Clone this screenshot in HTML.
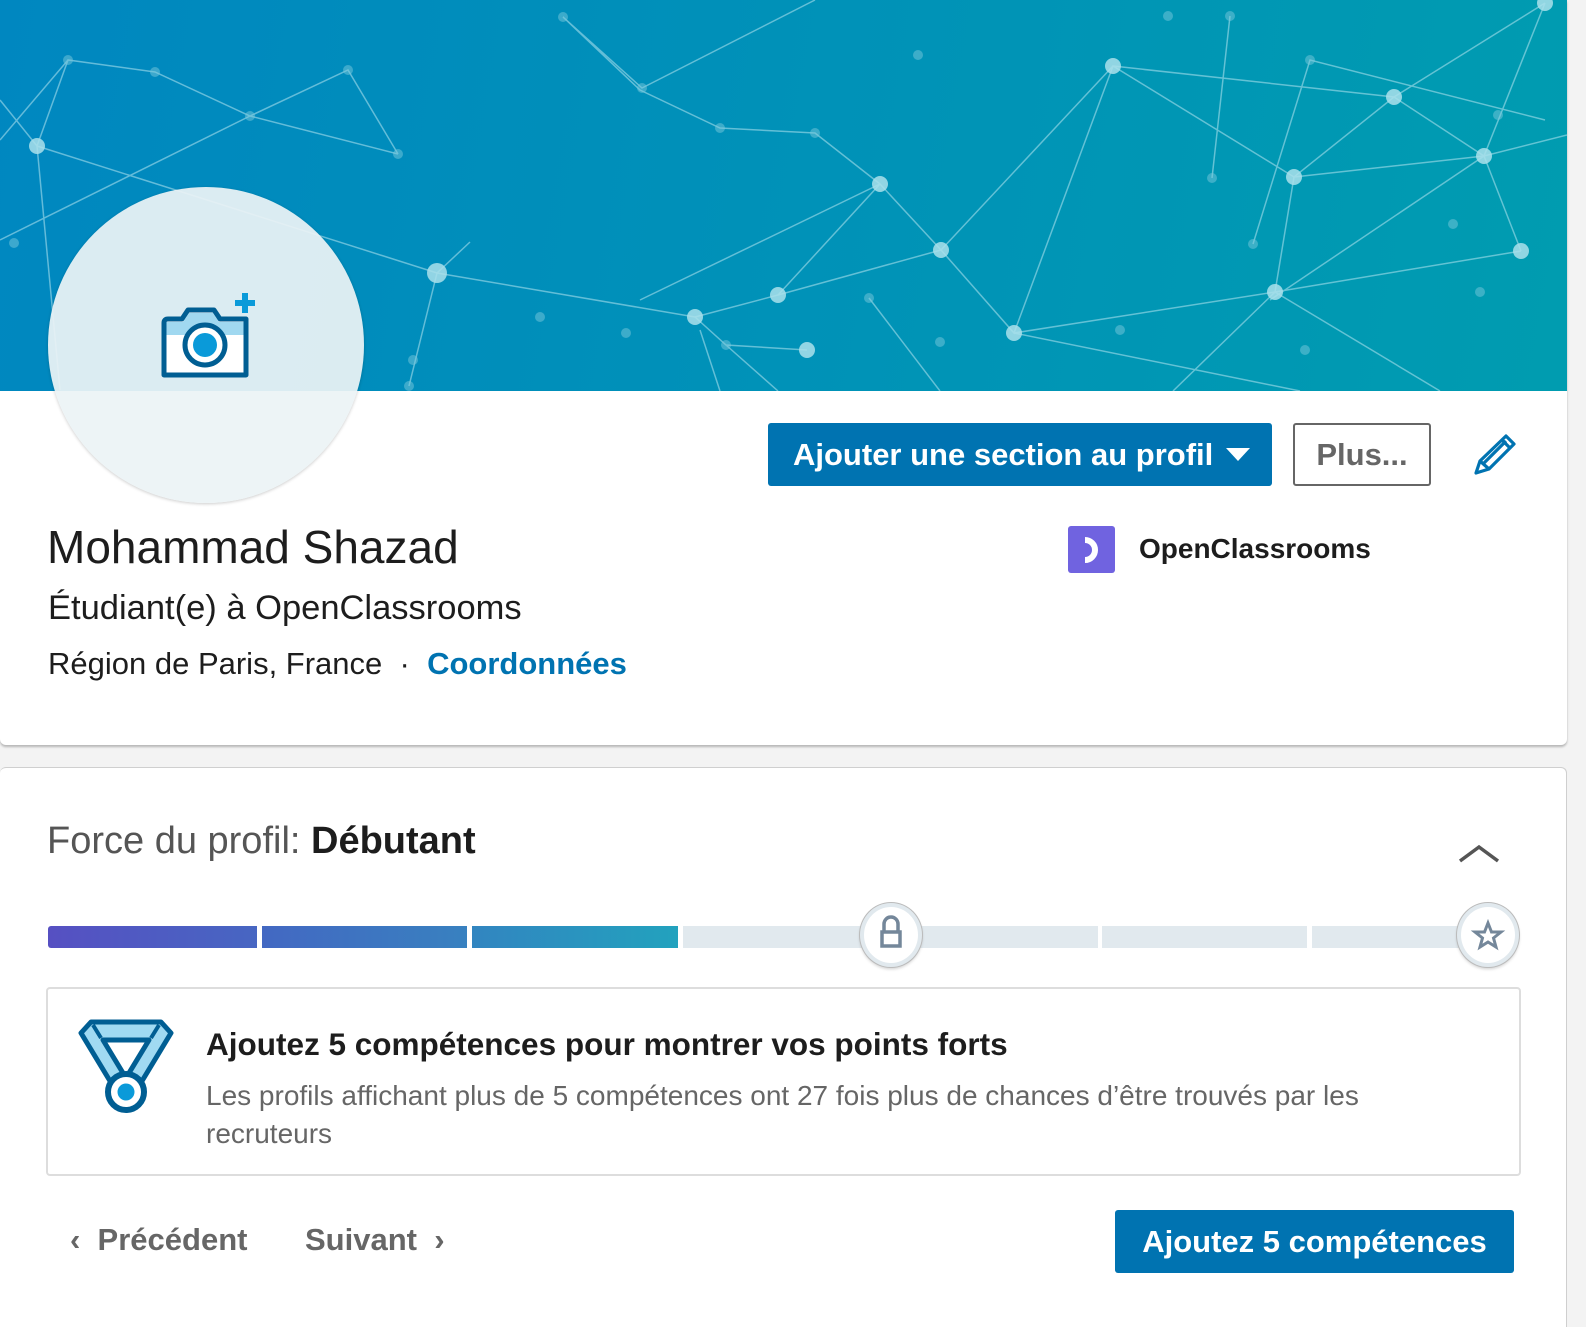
<!DOCTYPE html>
<html><head><meta charset="utf-8"><style>
*{margin:0;padding:0;box-sizing:border-box}
body{width:1586px;height:1322px;background:#f3f3f3;font-family:"Liberation Sans",sans-serif;position:relative;overflow:hidden}
.card1{position:absolute;left:0;top:0;width:1567px;height:745px;background:#fff;border-radius:0 0 6px 6px;box-shadow:0 2px 2px rgba(0,0,0,.25)}
.banner{position:absolute;left:0;top:0;width:1567px;height:391px;background:linear-gradient(100deg,#0087c0,#009cb0)}
.avatar{position:absolute;left:48px;top:187px;width:316px;height:316px;border-radius:50%;background:rgba(236,243,245,.93);box-shadow:0 1px 3px rgba(0,0,0,.2)}
.card2{position:absolute;left:0;top:767px;width:1567px;height:560px;background:#fff;border-top:1px solid #cfcfcf;border-right:1px solid #cfcfcf;border-radius:6px 6px 0 0}
.t{position:absolute;white-space:nowrap}
.btn{position:absolute;background:#0073b1;color:#fff;font-weight:bold;border-radius:3px}
.seg{position:absolute;top:926px;height:22px;width:205px;background:#e1e9ee}
.circ{position:absolute;width:62px;height:64px;border-radius:50%;background:#fff;border:4px solid #e1e9ee;box-shadow:0 0 0 1px #bbb,0 2px 3px rgba(0,0,0,.2)}
</style></head><body>
<div class="card1">
<div class="banner">
<svg width="1567" height="391" style="position:absolute;left:0;top:0">
<g stroke="rgba(180,230,240,.55)" stroke-width="1.5" fill="none">
<path d="M37 146L437 273L695 317M37 146L68 60L155 72L250 116L398 154M68 60L0 140M250 116L348 70L398 154M37 146L60 390M437 273L409 386M437 273L470 242M695 317L778 295L880 184L941 250L1014 333L1113 66L1294 177L1394 97L1545 3M778 295L941 250M695 317L726 345L807 350M880 184L815 133L720 128L640 90L563 17M941 250L1113 66M1014 333L1275 292L1521 251M1294 177L1275 292L1173 391M1484 156L1545 3M1484 156L1521 251M1294 177L1484 156L1567 135M1275 292L1440 391M1014 333L1300 391M1113 66L1394 97L1484 156M1484 156L1270 300M726 345L778 391M0 100L37 146M880 184L640 300M563 17L642 88L815 0M1212 178L1230 16M1253 244L1310 60L1545 120M869 298L940 391M0 240L250 116M700 330L720 391"/>
</g>
<g fill="rgba(170,225,235,.85)">
<circle cx="37" cy="146" r="8"/><circle cx="437" cy="273" r="10"/><circle cx="880" cy="184" r="8"/><circle cx="941" cy="250" r="8"/><circle cx="778" cy="295" r="8"/><circle cx="695" cy="317" r="8"/><circle cx="807" cy="350" r="8"/><circle cx="1014" cy="333" r="8"/><circle cx="1113" cy="66" r="8"/><circle cx="1294" cy="177" r="8"/><circle cx="1394" cy="97" r="8"/><circle cx="1484" cy="156" r="8"/><circle cx="1521" cy="251" r="8"/><circle cx="1275" cy="292" r="8"/><circle cx="1545" cy="3" r="8"/>
</g>
<g fill="rgba(120,200,220,.5)">
<circle cx="68" cy="60" r="5"/><circle cx="155" cy="72" r="5"/><circle cx="250" cy="116" r="5"/><circle cx="348" cy="70" r="5"/><circle cx="398" cy="154" r="5"/><circle cx="563" cy="17" r="5"/><circle cx="642" cy="88" r="5"/><circle cx="720" cy="128" r="5"/><circle cx="815" cy="133" r="5"/><circle cx="869" cy="298" r="5"/><circle cx="726" cy="345" r="5"/><circle cx="626" cy="333" r="5"/><circle cx="540" cy="317" r="5"/><circle cx="1168" cy="16" r="5"/><circle cx="1212" cy="178" r="5"/><circle cx="1253" cy="244" r="5"/><circle cx="1310" cy="60" r="5"/><circle cx="1305" cy="350" r="5"/><circle cx="1120" cy="330" r="5"/><circle cx="1453" cy="224" r="5"/><circle cx="1498" cy="115" r="5"/><circle cx="14" cy="243" r="5"/><circle cx="409" cy="386" r="5"/><circle cx="413" cy="360" r="5"/><circle cx="918" cy="55" r="5"/><circle cx="940" cy="342" r="5"/><circle cx="1230" cy="16" r="5"/><circle cx="1480" cy="292" r="5"/>
</g>
</svg>
</div>
<div class="avatar">
<svg width="100" height="90" style="position:absolute;left:112px;top:104px" viewBox="0 0 100 90">
<path d="M4 32 Q4 28 8 28 L22 28 L28 19 L54 19 L60 28 L86 28 L86 84 L4 84 Z" fill="#fff" stroke="#005e93" stroke-width="5" stroke-linejoin="round"/>
<path d="M6.5 31 L23 31 L29 22 L53 22 L59 31 L83.5 31 L83.5 44 L6.5 44 Z" fill="#a0d8f0"/>
<circle cx="45" cy="54" r="20" fill="#fff" stroke="#005e93" stroke-width="5"/>
<circle cx="45" cy="54" r="12" fill="#0a9ad9"/>
<path d="M85 2V22M75 12H95" stroke="#0a9ad9" stroke-width="6"/>
</svg>
</div>
<div class="btn" style="left:768px;top:423px;width:504px;height:63px;font-size:31px;line-height:63px;padding-left:25px">Ajouter une section au profil
<svg width="24" height="14" style="position:absolute;left:458px;top:25px"><path d="M0 0H24L12 13Z" fill="#fff"/></svg></div>
<div class="t" style="left:1293px;top:423px;width:138px;height:63px;border:2px solid #666;border-radius:3px;color:#666;font-weight:bold;font-size:31px;line-height:59px;text-align:center">Plus...</div>
<svg width="44" height="44" style="position:absolute;left:1473px;top:433px" viewBox="0 0 44 44"><path d="M3 40L7 28L33 3L41 11L16 36Z M7 28L16 36 M29 7L37 15 M10 31L33 8" fill="none" stroke="#0073b1" stroke-width="3.2" stroke-linejoin="round"/></svg>
<div class="t" style="left:47px;top:520px;font-size:46px;color:#1d1d1d">Mohammad Shazad</div>
<div class="t" style="left:48px;top:589px;font-size:34.5px;color:#1d1d1d">Étudiant(e) à OpenClassrooms</div>
<div class="t" style="left:48px;top:646px;font-size:31px;color:#1d1d1d">Région de Paris, France &nbsp;· &nbsp;<span style="color:#0073b1;font-weight:bold">Coordonnées</span></div>
<div style="position:absolute;left:1068px;top:526px;width:47px;height:47px;background:#7063e0;border-radius:3px"><svg width="47" height="47"><path d="M17 14 A10 10 0 1 1 17 34" fill="none" stroke="#fff" stroke-width="6"/></svg></div>
<div class="t" style="left:1139px;top:533px;font-size:28px;font-weight:bold;color:#1d1d1d">OpenClassrooms</div>
</div>
<div class="card2"></div>
<div class="t" style="left:47px;top:820px;font-size:38px;color:#555">Force du profil: <b style="color:#1d1d1d">Débutant</b></div>
<svg width="44" height="22" style="position:absolute;left:1458px;top:843px"><path d="M2 18L21 4L40 18" fill="none" stroke="#555" stroke-width="3.5"/></svg>
<div class="seg" style="left:48px;width:209px;border-radius:3px 0 0 3px;background:linear-gradient(90deg,#5650c2,#4766c2)"></div>
<div class="seg" style="left:262px;background:linear-gradient(90deg,#4368c2,#3881c0)"></div>
<div class="seg" style="left:472px;width:206px;background:linear-gradient(90deg,#3285c0,#22a2be)"></div>
<div class="seg" style="left:683px"></div><div class="seg" style="left:893px"></div><div class="seg" style="left:1102px"></div><div class="seg" style="left:1312px;width:180px"></div>
<div class="circ" style="left:860px;top:903px"><svg width="54" height="56"><path d="M20 25V17A7 7 0 0 1 34 17V25" fill="none" stroke="#74879a" stroke-width="3.5"/><rect x="18" y="25" width="18" height="14" fill="#fff" stroke="#74879a" stroke-width="3.5"/></svg></div>
<div class="circ" style="left:1457px;top:903px"><svg width="54" height="56"><path d="M27 16L30.5 25L40 25L32.5 31L35 40L27 35L19 40L21.5 31L14 25L23.5 25Z" fill="none" stroke="#74879a" stroke-width="3"/></svg></div>
<div style="position:absolute;left:46px;top:987px;width:1475px;height:189px;border:2px solid #ddd;border-radius:4px;background:#fff"></div>
<svg width="100" height="100" style="position:absolute;left:78px;top:1018px" viewBox="0 0 100 100">
<path d="M3 15L13 4L83 4L93 15L61 68L35 68Z" fill="#a0daf2" stroke="#005e93" stroke-width="5" stroke-linejoin="round"/>
<path d="M25 22L71 22L48 60Z" fill="#fff" stroke="#005e93" stroke-width="5" stroke-linejoin="round"/>
<path d="M15 7L23 20M81 7L73 20" stroke="#005e93" stroke-width="4"/>
<circle cx="48" cy="74" r="18" fill="#fff" stroke="#005e93" stroke-width="6"/>
<circle cx="48" cy="74" r="8.5" fill="#0a9ad9"/>
</svg>
<div class="t" style="left:206px;top:1026px;font-size:31.5px;font-weight:bold;color:#1d1d1d">Ajoutez 5 compétences pour montrer vos points forts</div>
<div class="t" style="left:206px;top:1077px;font-size:28px;color:#666;line-height:38px;white-space:normal;width:1220px">Les profils affichant plus de 5 compétences ont 27 fois plus de chances d’être trouvés par les recruteurs</div>
<div class="t" style="left:70px;top:1222px;font-size:31px;font-weight:bold;color:#666">‹ &nbsp;Précédent</div>
<div class="t" style="left:305px;top:1222px;font-size:31px;font-weight:bold;color:#666">Suivant &nbsp;›</div>
<div class="btn" style="left:1115px;top:1210px;width:399px;height:63px;font-size:31px;line-height:63px;text-align:center">Ajoutez 5 compétences</div>
</body></html>
